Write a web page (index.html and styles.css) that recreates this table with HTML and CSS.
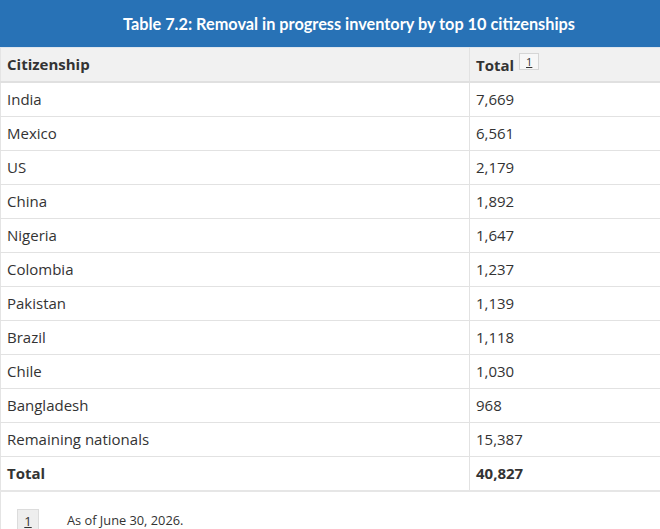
FILE: index.html
```html
<!DOCTYPE html>
<html lang="en">
<head>
<meta charset="utf-8">
<title>Table 7.2</title>
<link rel="stylesheet" href="styles.css">
</head>
<body>
<div class="wrap">
  <div class="caption">Table 7.2: Removal in progress inventory by top 10 citizenships</div>
  <table class="data">
    <thead>
      <tr><th class="c1">Citizenship</th><th class="c2">Total <span class="fn">1</span></th></tr>
    </thead>
    <tbody>
      <tr><td>India</td><td>7,669</td></tr>
      <tr><td>Mexico</td><td>6,561</td></tr>
      <tr><td>US</td><td>2,179</td></tr>
      <tr><td>China</td><td>1,892</td></tr>
      <tr><td>Nigeria</td><td>1,647</td></tr>
      <tr><td>Colombia</td><td>1,237</td></tr>
      <tr><td>Pakistan</td><td>1,139</td></tr>
      <tr><td>Brazil</td><td>1,118</td></tr>
      <tr><td>Chile</td><td>1,030</td></tr>
      <tr><td>Bangladesh</td><td>968</td></tr>
      <tr><td>Remaining nationals</td><td>15,387</td></tr>
      <tr class="total"><td>Total</td><td>40,827</td></tr>
    </tbody>
  </table>
  <div class="notes">
    <div class="note"><span class="fnbox">1</span><span class="notetext">As of June 30, 2026.</span></div>
  </div>
</div>
</body>
</html>
```
FILE: styles.css
```css
html, body { margin: 0; padding: 0; background: #fff; }
body { font-family: "Open Sans", "Noto Sans", sans-serif; color: #333; overflow: hidden; }
.wrap { width: 660px; }
.caption {
  background: #2872b6;
  color: #fff;
  font-family: Lato, "Open Sans", sans-serif;
  font-weight: 700;
  font-size: 16.3px;
  height: 47px;
  line-height: 47px;
  text-align: center;
  padding-left: 38px;
  box-sizing: border-box;
}
.data { width: 100%; border-collapse: collapse; font-size: 15px; border-left: 1px solid #e4e4e4; }
.data th, .data td { text-align: left; padding: 0 6px 2px; height: 31px; border-bottom: 1px solid #e2e2e2; }
.data th { background: #f1f1f1; font-weight: 700; border-top: 1px solid #dfe6ee; border-bottom: 2px solid #e0e0e0; }
.data td:first-child, .data th:first-child { width: 456px; border-right: 1px solid #e2e2e2; }
.data .total td { font-weight: 700; border-bottom: 2px solid #e6e6e6; }
.fn {
  display: inline-block; font-weight: 400; font-size: 11px; line-height: 15px;
  padding: 0 6px; border: 1px solid #d6d6d6; background: #f7f7f7; text-decoration: underline;
  vertical-align: 5px; margin-left: 1px;
}
.notes { border-left: 1px solid #e4e4e4; padding: 17px 0 0 16px; height: 40px; box-sizing: border-box; }
.note { display: flex; align-items: center; font-size: 12.8px; }
.fnbox {
  display: inline-block; width: 22px; height: 22px; line-height: 22px; text-align: center;
  background: #eee; border: 1px solid #dcdcdc; text-decoration: underline; box-sizing: border-box; font-size: 13px;
}
.notetext { margin-left: 28px; }
```
